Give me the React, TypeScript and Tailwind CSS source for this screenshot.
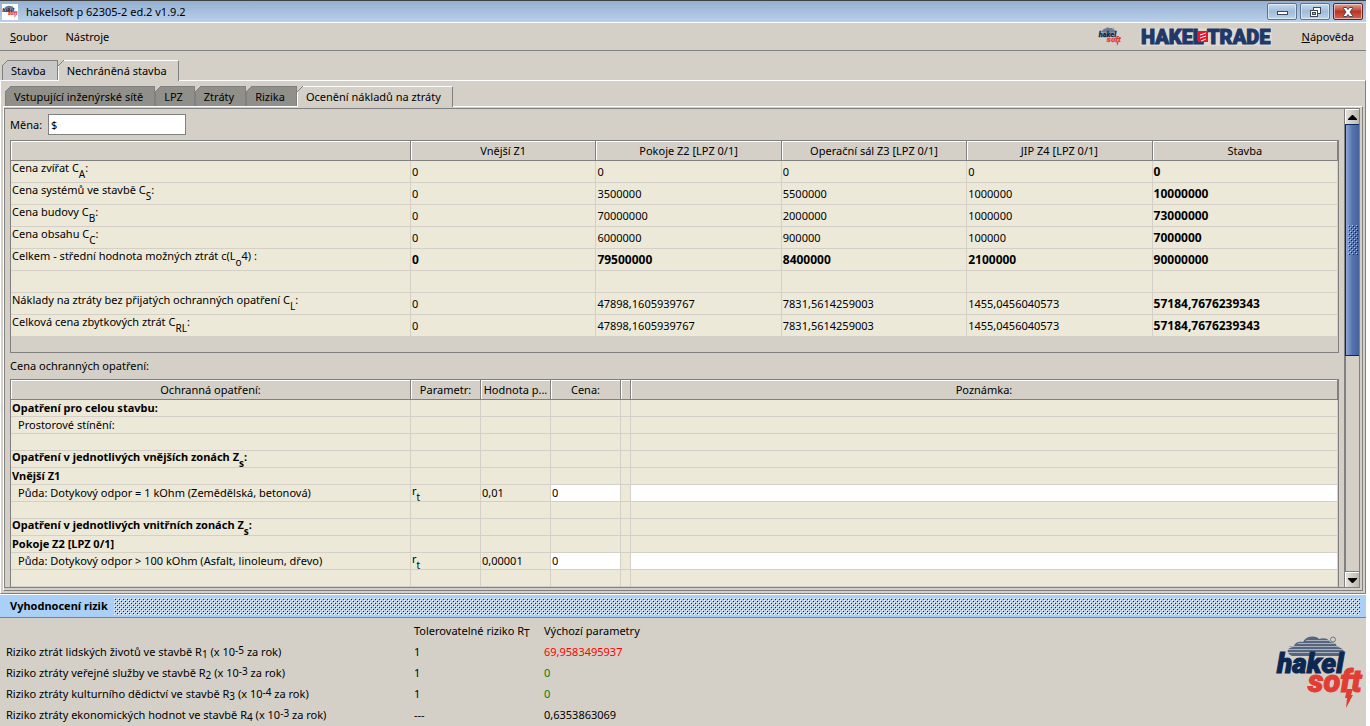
import type { ReactNode } from 'react'

const costHeaders = [
  '',
  'Vnější Z1',
  'Pokoje Z2 [LPZ 0/1]',
  'Operační sál Z3 [LPZ 0/1]',
  'JIP Z4 [LPZ 0/1]',
  'Stavba',
]

const costRows: { label: ReactNode; values: string[]; bold?: boolean }[] = [
  { label: <>Cena zvířat C<Sub>A</Sub>:</>, values: ['0', '0', '0', '0', '0'] },
  { label: <>Cena systémů ve stavbě C<Sub>S</Sub>:</>, values: ['0', '3500000', '5500000', '1000000', '10000000'] },
  { label: <>Cena budovy C<Sub>B</Sub>:</>, values: ['0', '70000000', '2000000', '1000000', '73000000'] },
  { label: <>Cena obsahu C<Sub>C</Sub>:</>, values: ['0', '6000000', '900000', '100000', '7000000'] },
  {
    label: <>Celkem - střední hodnota možných ztrát c(L<Sub>o</Sub>4) :</>,
    values: ['0', '79500000', '8400000', '2100000', '90000000'],
    bold: true,
  },
  { label: '', values: ['', '', '', '', ''] },
  {
    label: <>Náklady na ztráty bez přijatých ochranných opatření C<Sub>L</Sub>:</>,
    values: ['0', '47898,1605939767', '7831,5614259003', '1455,0456040573', '57184,7676239343'],
  },
  {
    label: <>Celková cena zbytkových ztrát C<Sub>RL</Sub>:</>,
    values: ['0', '47898,1605939767', '7831,5614259003', '1455,0456040573', '57184,7676239343'],
  },
]

const measureRows: { label: ReactNode; heading?: boolean; indexed?: boolean; value?: string }[] = [
  { label: 'Opatření pro celou stavbu:', heading: true },
  { label: 'Prostorové stínění:' },
  { label: '' },
  { label: <>Opatření v jednotlivých vnějších zonách Z<Sub>s</Sub>:</>, heading: true, indexed: true },
  { label: 'Vnější Z1', heading: true },
  { label: 'Půda: Dotykový odpor = 1 kOhm (Zemědělská, betonová)', value: '0,01' },
  { label: '' },
  { label: <>Opatření v jednotlivých vnitřních zonách Z<Sub>s</Sub>:</>, heading: true, indexed: true },
  { label: 'Pokoje Z2 [LPZ 0/1]', heading: true },
  { label: 'Půda: Dotykový odpor > 100 kOhm (Asfalt, linoleum, dřevo)', value: '0,00001' },
  { label: '' },
]

const risks = [
  { name: 'Riziko ztrát lidských životů ve stavbě R', index: '1', exp: '-5', limit: '1', value: '69,9583495937', color: 'text-[#ff0000]' },
  { name: 'Riziko ztráty veřejné služby ve stavbě R', index: '2', exp: '-3', limit: '1', value: '0', color: 'text-[#008000]' },
  { name: 'Riziko ztráty kulturního dědictví ve stavbě R', index: '3', exp: '-4', limit: '1', value: '0', color: 'text-[#008000]' },
  { name: 'Riziko ztráty ekonomických hodnot ve stavbě R', index: '4', exp: '-3', limit: '---', value: '0,6353863069', color: 'text-black' },
]

function Sub({ children }: { children: ReactNode }) {
  return <sub className="-bottom-1.5 text-[10px]">{children}</sub>
}

function HakelsoftLogo({ className }: { className: string }) {
  return (
    <svg viewBox="0 0 92 74" className={`overflow-visible ${className}`} role="img" aria-label="hakelsoft">
      <path
        d="M18 20c-7-3-5-9 2-9 0-5 6-6 9-5 3-6 12-7 16-3 5-2 10 0 11 3 5 0 7 3 7 5 8 1 9 7 4 9z"
        fill="#56657f"
      />
      <path d="M15 10.500h50M14 13.500h55M14 16.500h55M24 7.500h38M32 4.500h24" stroke="#a9b0bc" strokeWidth="1" />
      <g fontFamily="Roboto" fontWeight="900" fontStyle="italic" strokeWidth="1">
        <text x="3" y="37" fontSize="28" fill="#0b2852" stroke="#0b2852">
          hakel
        </text>
        <text x="34" y="56" fontSize="31" fill="#e23d32" stroke="#e23d32">
          soft
        </text>
      </g>
      <path d="M73 53h6l-2 6h2l-7 13 1-10h-2z" fill="#e23d32" />
      <circle cx="59" cy="3.500" r="2.500" fill="none" stroke="#56657f" strokeWidth="0.800" />
    </svg>
  )
}

function HakelTradeLogo() {
  return (
    <svg className="block overflow-visible bg-[#dcd9d2]" width="132" height="18" viewBox="0 0 132 18" role="img" aria-label="Hakel Trade">
      <g fontFamily="Roboto" fontSize="20" fontWeight="900" fill="#1f3868" stroke="#1f3868" strokeWidth="1">
        <text x="1" y="16">HAKEL</text>
        <text x="67" y="16">TRADE</text>
      </g>
      <path d="M58 3h10v11H58z" fill="#e3182c" />
      <path d="M60 7l6-2M60 10l6-2M61 13l5-2" fill="none" stroke="#fff" strokeWidth="1" />
    </svg>
  )
}

function Tab({ children, selected, tone = '' }: { children: string; selected?: boolean; tone?: string }) {
  return (
    <button
      role="tab"
      aria-selected={!!selected}
      className={`relative border-t border-r border-l border-[#808080] pr-[11px] pl-2 leading-5 ${
        selected ? '-mb-px h-[21px] border-t-white border-l-white bg-[#d4d0c8]' : `h-5 ${tone}`
      }`}
    >
      {children}
      <svg className="absolute -top-px -left-px" width="6" height="6" viewBox="0 0 6 6" aria-hidden="true">
        <path d="M0 0h6L0 6z" fill="#d4d0c8" />
        <path d="M0 6L6 0" stroke="#808080" />
      </svg>
    </button>
  )
}

function WindowButton({ label, close, children }: { label: string; close?: boolean; children: ReactNode }) {
  return (
    <button
      aria-label={label}
      className={`flex h-[17px] w-[30px] items-center justify-center rounded-xs border ${
        close
          ? 'border-[#5c2424] bg-linear-to-b from-[#dca498] via-[#bc3424] to-[#d06450]'
          : 'border-[#5c7490] bg-linear-to-b from-[#c8daee] via-[#a0bcd8] to-[#bcd4ec]'
      } shadow-[inset_0_0_0_1px_#ffffff80]`}
    >
      <svg width="14" height="12" viewBox="0 0 14 12" fill="#fff" stroke="#404858">
        {children}
      </svg>
    </button>
  )
}

function ScrollButton({ label, path }: { label: string; path: string }) {
  return (
    <button
      aria-label={label}
      className="flex h-[15px] shrink-0 items-center justify-center border-t border-l border-white bg-linear-to-r from-[#e4e2dc] to-[#bcb8b0]"
    >
      <svg width="9" height="5" viewBox="0 0 9 5">
        <path d={path} />
      </svg>
    </button>
  )
}

function Dots({ id, className, light, dark }: { id: string; className: string; light: string; dark: string }) {
  return (
    <svg className={className} aria-hidden="true" shapeRendering="crispEdges">
      <pattern id={id} width="4" height="4" patternUnits="userSpaceOnUse">
        <path d="M0 0h1v1H0zM2 2h1v1H2z" fill={light} />
        <path d="M1 1h1v1H1zM3 3h1v1H3z" fill={dark} />
      </pattern>
      <rect width="100%" height="100%" fill={`url(#${id})`} />
    </svg>
  )
}

function HeaderCell({ children, className = '' }: { children: ReactNode; className?: string }) {
  return (
    <th
      className={`h-5 border-r border-b border-[#808080] bg-[#d4d0c8] p-0 font-normal whitespace-nowrap shadow-[inset_1px_1px_0_#fff] ${className}`}
    >
      {children}
    </th>
  )
}

const cell = 'border-r border-b border-[#d4d0c8] p-0 pl-px leading-4 whitespace-nowrap'

export default function App() {
  return (
    <div className="h-screen bg-white pr-1 font-['Noto_Sans',sans-serif] text-[11px] leading-4 text-black">
      <div className="flex h-full flex-col overflow-hidden bg-[#d4d0c8]">
        {/* Title bar */}
        <header className="flex h-[23px] shrink-0 items-center border-t border-b border-t-[#404040] border-b-white bg-linear-to-b from-[#94b0d2] to-[#b8d0ea] pr-[3px] pl-0.5">
          <HakelsoftLogo className="h-4 w-4 bg-white" />
          <h1 className="ml-2">hakelsoft p 62305-2 ed.2 v1.9.2</h1>
          <div className="ml-auto flex gap-[3px]">
            <WindowButton label="Minimalizovat">
              <rect x="2.500" y="5.500" width="10" height="3" />
            </WindowButton>
            <WindowButton label="Obnovit">
              <rect x="5.500" y="1.500" width="7" height="6" />
              <rect x="2.500" y="4.500" width="7" height="6" />
              <rect x="4.500" y="6.500" width="3" height="2" fill="#a0bcd8" />
            </WindowButton>
            <WindowButton label="Zavřít" close>
              <path d="M2.500 1.500h3L7 3.500l1.500-2h3v1L9 6l2.500 3.500v1h-3L7 8.500l-1.500 2h-3v-1L5 6 2.500 2.500z" />
            </WindowButton>
          </div>
        </header>

        {/* Menu */}
        <nav className="flex h-7 shrink-0 items-center border-b border-[#808080] pr-3 pl-2.5">
          <button><u>S</u>oubor</button>
          <button className="ml-[18px]">Nástroje</button>
          <HakelsoftLogo className="ml-auto h-5 w-6" />
          <div className="mr-[30px] ml-[18px]">
            <HakelTradeLogo />
          </div>
          <button><u>N</u>ápověda</button>
        </nav>

        {/* Outer tabs */}
        <div role="tablist" className="mt-[9px] flex shrink-0 items-start pl-0.5">
          <Tab tone="bg-[#c8c8c8]">Stavba</Tab>
          <Tab selected>Nechráněná stavba</Tab>
        </div>

        <div className="flex min-h-0 flex-1 flex-col border border-[#808080] border-t-white border-l-white px-0.5 pt-[5px] pb-0.5">
          {/* Inner tabs */}
          <div role="tablist" className="flex shrink-0 items-start pl-0.5">
            <Tab tone="bg-[#918f89]">Vstupující inženýrské sítě</Tab>
            <Tab tone="bg-[#918f89]">LPZ</Tab>
            <Tab tone="bg-[#918f89]">Ztráty</Tab>
            <Tab tone="bg-[#918f89]">Rizika</Tab>
            <Tab selected>Ocenění nákladů na ztráty</Tab>
          </div>

          <div className="flex min-h-0 flex-1 flex-col border border-[#808080] border-t-white border-l-white pt-px pr-0.5 pb-0.5">
            <div className="flex min-h-0 flex-1 border border-[#808080]">
              <main className="min-w-0 flex-1 overflow-hidden pr-[5px] pl-[5px]">
                <div className="flex items-center pt-[5px]">
                  <label htmlFor="currency">Měna:</label>
                  <input
                    id="currency"
                    defaultValue="$"
                    className="ml-1.5 h-[21px] w-[138px] border border-[#808080] bg-white px-0.5 outline-none"
                  />
                </div>

                {/* Costs by zone */}
                <div className="mt-[5px] border border-[#808080] pb-[15px]">
                  <table className="w-full table-fixed border-separate border-spacing-0 bg-[#ece9d8]">
                    <thead>
                      <tr>
                        {costHeaders.map((title, i) => (
                          <HeaderCell key={i} className={i === 0 ? 'w-[400px]' : ''}>
                            {title}
                          </HeaderCell>
                        ))}
                      </tr>
                    </thead>
                    <tbody>
                      {costRows.map((row, i) => (
                        <tr key={i} className="h-[22px]">
                          <td className={`${cell} align-top`}>
                            <div className="h-4 leading-[14px]">{row.label}</div>
                          </td>
                          {row.values.map((value, j) => (
                            <td key={j} className={`${cell} ${row.bold || j === 4 ? 'text-xs font-bold' : ''}`}>
                              {value}
                            </td>
                          ))}
                        </tr>
                      ))}
                    </tbody>
                  </table>
                </div>

                <h2 className="mt-[5px] mb-[5px]">Cena ochranných opatření:</h2>

                {/* Protective measures */}
                <div className="border border-b-0 border-[#808080]">
                  <table className="w-full table-fixed border-separate border-spacing-0 bg-[#ece9d8]">
                    <thead>
                      <tr>
                        <HeaderCell className="w-[400px]">Ochranná opatření:</HeaderCell>
                        <HeaderCell className="w-[70px]">Parametr:</HeaderCell>
                        <HeaderCell className="w-[70px]">Hodnota p...</HeaderCell>
                        <HeaderCell className="w-[70px]">Cena:</HeaderCell>
                        <HeaderCell className="w-2.5">{''}</HeaderCell>
                        <HeaderCell>Poznámka:</HeaderCell>
                      </tr>
                    </thead>
                    <tbody>
                      {measureRows.map((row, i) => (
                        <tr key={i} className="h-[17px]">
                          <td className={cell}>
                            <div className={`h-4 ${row.heading ? 'font-bold' : 'pl-1.5'} ${row.indexed ? 'leading-3' : ''}`}>
                              {row.label}
                            </div>
                          </td>
                          <td className={cell}>
                            {row.value && <div className="h-4 leading-3">r<Sub>t</Sub></div>}
                          </td>
                          <td className={cell}>{row.value}</td>
                          <td className={`${cell} ${row.value ? 'bg-white' : ''}`}>
                            {row.value && (
                              <input aria-label="Cena" defaultValue="0" className="block h-4 w-full outline-none" />
                            )}
                          </td>
                          <td className={cell}></td>
                          <td className={`${cell} ${row.value ? 'bg-white' : ''}`}>
                            {row.value && <input aria-label="Poznámka" className="block h-4 w-full outline-none" />}
                          </td>
                        </tr>
                      ))}
                    </tbody>
                  </table>
                </div>
              </main>

              {/* Scroll bar */}
              <div className="flex w-[15px] shrink-0 flex-col border-l border-[#808080]">
                <ScrollButton label="Nahoru" path="M4 0h1l4 4v1H0V4z" />
                <div className="flex h-[232px] shrink-0 items-center justify-center border border-r-0 border-[#0a246a] bg-linear-to-r from-[#8fa8d4] via-[#5472ac] to-[#44629c]">
                  <Dots id="thumb" className="h-[30px] w-2.5" light="#a8c4f0" dark="#0a246a" />
                </div>
                <div className="flex-1 border-b border-l border-[#808080]" />
                <ScrollButton label="Dolů" path="M0 0h9v1L5 5H4L0 1z" />
              </div>
            </div>
          </div>
        </div>

        {/* Risk evaluation */}
        <section className="shrink-0">
          <div className="flex h-6 items-center border-t border-b border-t-white border-b-[#808080] bg-[#aad0f8] pr-1.5 pl-2.5">
            <h2 className="font-bold">Vyhodnocení rizik</h2>
            <Dots id="grip" className="ml-1.5 h-[17px] min-w-0 flex-1" light="#ffffff" dark="#0a246a" />
          </div>
          <div className="flex items-start pt-0.5 pb-px pl-1.5">
            <table className="table-fixed">
              <thead>
                <tr className="h-[21px] text-left">
                  <th className="w-[408px] p-0"></th>
                  <th className="w-[130px] p-0 font-normal">Tolerovatelné riziko R<sub className="-bottom-0.5 text-[10px]">T</sub></th>
                  <th className="p-0 font-normal">Výchozí parametry</th>
                </tr>
              </thead>
              <tbody>
                {risks.map((risk) => (
                  <tr key={risk.index} className="h-[21px]">
                    <td className="p-0">
                      {risk.name}
                      <sub className="-bottom-0.5 text-[10px]">{risk.index}</sub> (x 10
                      <sup className="-top-0.5 text-[10px]">{risk.exp}</sup> za rok)
                    </td>
                    <td className="p-0">{risk.limit}</td>
                    <td className={`p-0 ${risk.color}`}>{risk.value}</td>
                  </tr>
                ))}
              </tbody>
            </table>
            <HakelsoftLogo className="mt-4 ml-auto h-[74px] w-[92px]" />
          </div>
        </section>
      </div>
    </div>
  )
}
